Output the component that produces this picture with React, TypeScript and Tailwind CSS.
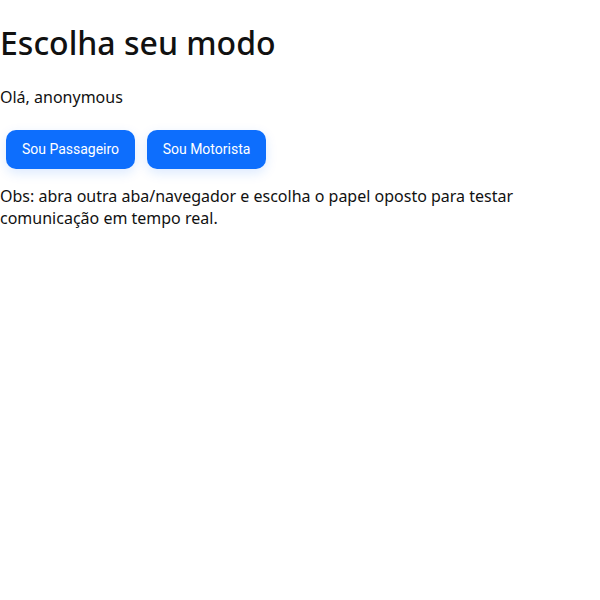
import React from "react";

export default function App() {
  return (
    <div className="bg-white text-black" style={{ fontFamily: '"Noto Sans", sans-serif' }}>
      <h1 className="m-0 pt-[21px] text-[32px] leading-[44px] font-medium text-[#111]">Escolha seu modo</h1>
      <p className="mt-[21px] text-[16px] leading-[22px] text-[#111]">Olá, anonymous</p>
      <div className="mt-[22px] flex gap-[12px] pl-[6px]">
        <button
          className="h-[39px] w-[129px] rounded-[10px] bg-[#0d6efd] text-[14px] text-white shadow-[0_4px_12px_rgba(13,110,253,0.15)]"
          style={{ fontFamily: "Roboto, sans-serif" }}
        >
          Sou Passageiro
        </button>
        <button
          className="h-[39px] w-[119px] rounded-[10px] bg-[#0d6efd] text-[14px] text-white shadow-[0_4px_12px_rgba(13,110,253,0.15)]"
          style={{ fontFamily: "Roboto, sans-serif" }}
        >
          Sou Motorista
        </button>
      </div>
      <p className="mt-[16px] text-[16px] leading-[22px] text-[#111]">
        Obs: abra outra aba/navegador e escolha o papel oposto para testar comunicação em tempo real.
      </p>
    </div>
  );
}
